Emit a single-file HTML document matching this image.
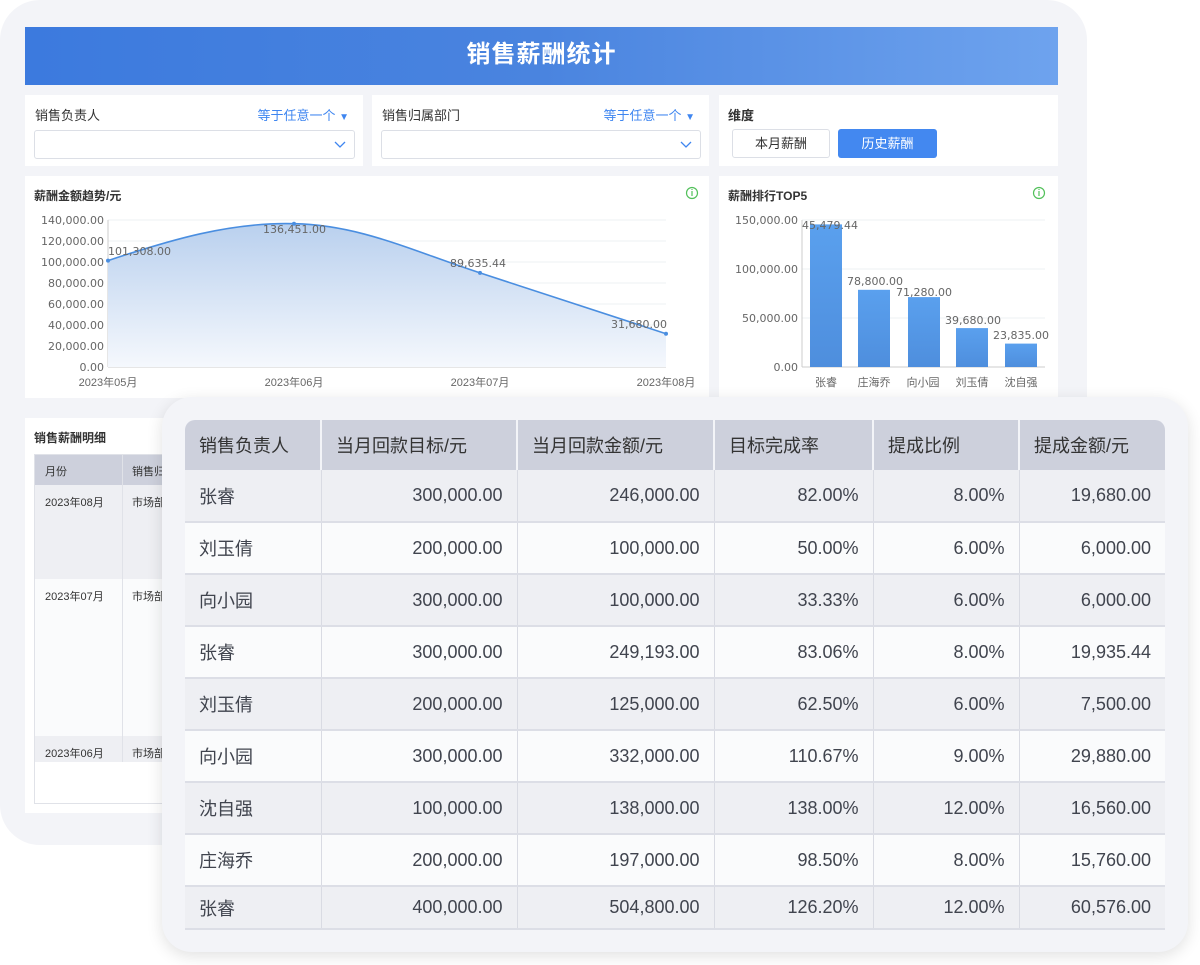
<!DOCTYPE html>
<html><head><meta charset="utf-8">
<style>
*{margin:0;padding:0;box-sizing:border-box}
body{width:1200px;height:965px;background:#fff;position:relative;overflow:hidden;font-family:"Liberation Sans","Noto Sans CJK SC",sans-serif;color:#333}
.abs{position:absolute}
.back{left:0;top:0;width:1087px;height:845px;background:#f3f4f8;border-radius:40px}
.banner{left:25px;top:27px;width:1033px;height:58px;background:linear-gradient(90deg,#3c7ade 0%,#4a84df 50%,#6ea3ee 100%);color:#fff;font-size:24px;font-weight:bold;text-align:center;line-height:56px;letter-spacing:1px}
.card{background:#fff;position:absolute}
.lbl{position:absolute;left:10px;top:10px;font-size:13px;color:#333}
.op{position:absolute;right:14px;top:10px;font-size:13px;color:#3f86f0}
.sel{position:absolute;left:9px;top:35px;right:8px;height:29px;border:1px solid #dcdfe6;border-radius:3px}
.title{position:absolute;left:9px;top:11px;font-size:12px;font-weight:bold;color:#333}
.front{left:162px;top:397px;width:1026px;height:555px;background:#f3f4f8;border-radius:30px;box-shadow:0 4px 16px rgba(0,0,0,.12)}
table.big{position:absolute;left:185px;top:420px;width:980px;border-collapse:collapse;font-size:18px;color:#40444e;border-radius:10px 10px 0 0;overflow:hidden}
table.big th{background:#cdd0dc;height:50px;text-align:left;padding-left:14px;font-weight:normal;color:#333;border-right:2px solid #f3f4f8}
table.big th:last-child{border-right:none}
table.big td{height:52px;border-right:1px solid #d9dbe3;border-bottom:2px solid #dcdee6;padding:0 14px;text-align:right}
table.big td:first-child{text-align:left}
table.big td:last-child{border-right:none}
table.big tr:nth-child(even) td{background:#eeeff3}
table.big tr:nth-child(odd) td{background:#fafbfc}
table.big tr.last td{height:43px}
</style></head><body>
<div class="abs back"></div>
<div class="abs banner">销售薪酬统计</div>

<div class="card" style="left:25px;top:95px;width:338px;height:71px">
 <div class="lbl">销售负责人</div><div class="op">等于任意一个 <span style="font-size:10px">▼</span></div>
 <div class="sel"><svg class="abs" style="right:8px;top:10px" width="12" height="8"><path d="M1 1l5 5 5-5" fill="none" stroke="#3f86f0" stroke-width="1.3"/></svg></div>
</div>
<div class="card" style="left:372px;top:95px;width:337px;height:71px">
 <div class="lbl">销售归属部门</div><div class="op">等于任意一个 <span style="font-size:10px">▼</span></div>
 <div class="sel"><svg class="abs" style="right:8px;top:10px" width="12" height="8"><path d="M1 1l5 5 5-5" fill="none" stroke="#3f86f0" stroke-width="1.3"/></svg></div>
</div>
<div class="card" style="left:719px;top:95px;width:339px;height:71px">
 <div class="abs" style="left:9px;top:10px;font-size:13px;font-weight:bold">维度</div>
 <div class="abs" style="left:13px;top:34px;width:98px;height:29px;border:1px solid #dcdfe6;border-radius:3px;font-size:13px;text-align:center;line-height:27px">本月薪酬</div>
 <div class="abs" style="left:119px;top:34px;width:99px;height:29px;background:#4388f0;border-radius:3px;font-size:13px;color:#fff;text-align:center;line-height:29px">历史薪酬</div>
</div>

<div class="card" style="left:25px;top:176px;width:684px;height:222px">
 <div class="title">薪酬金额趋势/元</div>
</div>
<div class="card" style="left:719px;top:176px;width:339px;height:222px">
 <div class="title">薪酬排行TOP5</div>
</div>

<svg class="abs" style="left:0;top:0" width="1100" height="400" font-family="DejaVu Sans, sans-serif" font-size="11">
 <defs><linearGradient id="ga" x1="0" y1="0" x2="0" y2="1"><stop offset="0" stop-color="#b9d0ee"/><stop offset="1" stop-color="#f5f8fd"/></linearGradient>
 <linearGradient id="gb" x1="0" y1="0" x2="0" y2="1"><stop offset="0" stop-color="#5aa0ee"/><stop offset="1" stop-color="#4e8edd"/></linearGradient></defs>
 <circle cx="692" cy="193" r="5.5" fill="none" stroke="#52c05a" stroke-width="1.2"/><path d="M692 191v5M692 189v1" stroke="#52c05a" stroke-width="1.2"/>
 <circle cx="1039" cy="193" r="5.5" fill="none" stroke="#52c05a" stroke-width="1.2"/><path d="M1039 191v5M1039 189v1" stroke="#52c05a" stroke-width="1.2"/>
 <g stroke="#eef0f3"><path d="M108 220H666M108 241H666M108 262H666M108 283H666M108 304H666M108 325H666M108 346H666"/></g>
 <path d="M108 367H666M108 220V367" stroke="#ccc"/>
 <path d="M108 260.6C170 240 230 222 294 223.7C360 225 410 250 480 272.9L666 333.7L666 367L108 367Z" fill="url(#ga)"/>
 <path d="M108 260.6C170 240 230 222 294 223.7C360 225 410 250 480 272.9L666 333.7" fill="none" stroke="#4a8ee0" stroke-width="1.6"/>
 <g fill="#4a8ee0"><circle cx="108" cy="260.6" r="2"/><circle cx="294" cy="223.7" r="2"/><circle cx="480" cy="272.9" r="2"/><circle cx="666" cy="333.7" r="2"/></g>
 <g fill="#666" text-anchor="end"><text x="104" y="224">140,000.00</text><text x="104" y="245">120,000.00</text><text x="104" y="266">100,000.00</text><text x="104" y="287">80,000.00</text><text x="104" y="308">60,000.00</text><text x="104" y="329">40,000.00</text><text x="104" y="350">20,000.00</text><text x="104" y="371">0.00</text></g>
 <g fill="#666"><text x="108" y="255">101,308.00</text><text x="263" y="233">136,451.00</text><text x="450" y="267">89,635.44</text><text x="611" y="328">31,680.00</text></g>
 <g fill="#666" text-anchor="middle" font-family="Liberation Sans, Noto Sans CJK SC, sans-serif"><text x="108" y="386">2023年05月</text><text x="294" y="386">2023年06月</text><text x="480" y="386">2023年07月</text><text x="666" y="386">2023年08月</text></g>
 <g stroke="#eef0f3"><path d="M802 220H1045M802 269H1045M802 318H1045"/></g>
 <path d="M802 367H1045M802 220V367" stroke="#ccc"/>
 <g fill="url(#gb)"><rect x="810" y="224.4" width="32" height="142.6"/><rect x="858" y="289.8" width="32" height="77.2"/><rect x="908" y="297.1" width="32" height="69.9"/><rect x="956" y="328.1" width="32" height="38.9"/><rect x="1005" y="343.6" width="32" height="23.4"/></g>
 <g fill="#666" text-anchor="end"><text x="798" y="224">150,000.00</text><text x="798" y="273">100,000.00</text><text x="798" y="322">50,000.00</text><text x="798" y="371">0.00</text></g>
 <g fill="#666"><text x="802" y="229">45,479.44</text><text x="847" y="285">78,800.00</text><text x="896" y="296">71,280.00</text><text x="945" y="324">39,680.00</text><text x="993" y="339">23,835.00</text></g>
 <g fill="#666" text-anchor="middle" font-family="Liberation Sans, Noto Sans CJK SC, sans-serif"><text x="826" y="386">张睿</text><text x="874" y="386">庄海乔</text><text x="923" y="386">向小园</text><text x="972" y="386">刘玉倩</text><text x="1021" y="386">沈自强</text></g>
</svg>

<div class="card" style="left:25px;top:418px;width:160px;height:395px">
 <div class="title" style="top:11px">销售薪酬明细</div>
 <div class="abs" style="left:9px;top:36px;width:150px;height:350px;border:1px solid #e0e2e8;font-size:11px;color:#333">
  <div class="abs" style="left:0;top:0;width:150px;height:30px;background:#cdd0dc"></div>
  <div class="abs" style="left:0;top:30px;width:150px;height:94px;background:#eeeff3"></div>
  <div class="abs" style="left:0;top:124px;width:150px;height:157px;background:#fafbfc"></div>
  <div class="abs" style="left:0;top:281px;width:150px;height:26px;background:#eeeff3"></div>
  <div class="abs" style="left:87px;top:0;width:1px;height:307px;background:#e0e2e8"></div>
  <div class="abs" style="left:10px;top:8px">月份</div><div class="abs" style="left:97px;top:8px">销售归</div>
  <div class="abs" style="left:10px;top:39px">2023年08月</div><div class="abs" style="left:97px;top:39px">市场部</div>
  <div class="abs" style="left:10px;top:133px">2023年07月</div><div class="abs" style="left:97px;top:133px">市场部</div>
  <div class="abs" style="left:10px;top:290px">2023年06月</div><div class="abs" style="left:97px;top:290px">市场部</div>
 </div>
</div>

<div class="abs front"></div>
<table class="big">
<tr><th style="width:136px">销售负责人</th><th style="width:196px">当月回款目标/元</th><th style="width:197px">当月回款金额/元</th><th style="width:159px">目标完成率</th><th style="width:146px">提成比例</th><th>提成金额/元</th></tr>
<tr><td>张睿</td><td>300,000.00</td><td>246,000.00</td><td>82.00%</td><td>8.00%</td><td>19,680.00</td></tr>
<tr><td>刘玉倩</td><td>200,000.00</td><td>100,000.00</td><td>50.00%</td><td>6.00%</td><td>6,000.00</td></tr>
<tr><td>向小园</td><td>300,000.00</td><td>100,000.00</td><td>33.33%</td><td>6.00%</td><td>6,000.00</td></tr>
<tr><td>张睿</td><td>300,000.00</td><td>249,193.00</td><td>83.06%</td><td>8.00%</td><td>19,935.44</td></tr>
<tr><td>刘玉倩</td><td>200,000.00</td><td>125,000.00</td><td>62.50%</td><td>6.00%</td><td>7,500.00</td></tr>
<tr><td>向小园</td><td>300,000.00</td><td>332,000.00</td><td>110.67%</td><td>9.00%</td><td>29,880.00</td></tr>
<tr><td>沈自强</td><td>100,000.00</td><td>138,000.00</td><td>138.00%</td><td>12.00%</td><td>16,560.00</td></tr>
<tr><td>庄海乔</td><td>200,000.00</td><td>197,000.00</td><td>98.50%</td><td>8.00%</td><td>15,760.00</td></tr>
<tr class="last"><td>张睿</td><td>400,000.00</td><td>504,800.00</td><td>126.20%</td><td>12.00%</td><td>60,576.00</td></tr>
</table>
</body></html>
